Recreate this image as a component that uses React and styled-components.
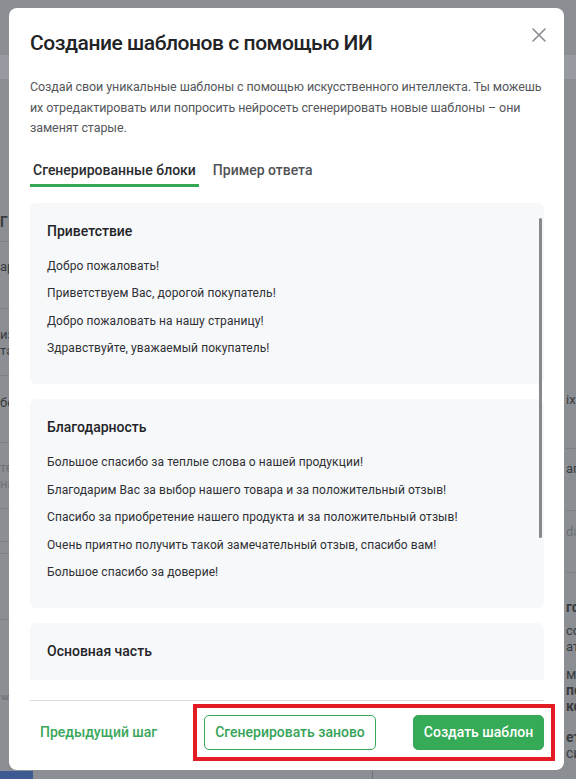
import React from "react";
import styled, { createGlobalStyle } from "styled-components";

const GlobalStyle = createGlobalStyle`
  html, body { margin: 0; padding: 0; }
  body { font-family: Roboto, "Noto Sans", Arial, sans-serif; }
  * { box-sizing: border-box; }
`;

const Screen = styled.div`
  position: relative;
  width: 576px;
  height: 779px;
  overflow: hidden;
  background: #8b8e93;
`;

/* ---------- dimmed page behind the modal ---------- */
const BgPage = styled.div`
  display: flex;
  flex-direction: column;
  height: 100%;
  color: #3a3c40;
  font-size: 13px;
`;
const BgHeader = styled.div`
  height: 24px;
  margin-top: 55px;
  background: #979aa0;
  flex: none;
`;
const BgMain = styled.div`
  flex: 1;
  display: grid;
  grid-template-columns: 9px 1fr;
  min-height: 0;
`;
const BgLeft = styled.div`
  display: flex;
  flex-direction: column;
  padding-top: 120px;
  overflow: hidden;
`;
const BgRight = styled.div`
  display: flex;
  flex-direction: column;
  padding: 313px 0 0 557px;
  overflow: hidden;
`;
const BgRow = styled.div`
  flex: none;
  height: ${(p) => p.$h}px;
  padding-top: ${(p) => p.$pt || 0}px;
  border-bottom: ${(p) => (p.$line ? "1px solid #7b7e83" : "none")};
  font-weight: ${(p) => (p.$bold ? 700 : 400)};
  color: ${(p) => (p.$light ? "#6e7176" : "#3a3c40")};
  font-size: ${(p) => (p.$bold ? 14 : 13)}px;
  line-height: 16px;
  white-space: nowrap;
  overflow: hidden;
`;
const Regular = styled.span`
  font-weight: 400;
`;
const BgBottom = styled.div`
  height: 8px;
  flex: none;
  display: grid;
  grid-template-columns: 33px 340px 1fr;
`;
const BgTab = styled.div`
  background: #3e5a93;
`;
const BgSplit = styled.div`
  border-right: 1px solid #6f7277;
`;

/* ---------- modal ---------- */
const Overlay = styled.div`
  position: absolute;
  inset: 0;
  padding: 8px 12px 9px 9px;
  display: flex;
`;
const Modal = styled.div`
  position: relative;
  flex: 1;
  background: #fff;
  border-radius: 8px;
  display: flex;
  flex-direction: column;
  padding: 21px 20px 20px 21px;
`;
const Title = styled.h1`
  margin: 0;
  font-size: 21px;
  line-height: 28px;
  font-weight: 500;
  color: #222326;
  letter-spacing: -0.45px;
`;
const CloseButton = styled.button`
  position: absolute;
  top: 19px;
  right: 17px;
  width: 16px;
  height: 16px;
  padding: 0;
  border: none;
  background: none;
  display: flex;
  cursor: pointer;
`;
const Description = styled.p`
  margin: 20px 0 0;
  font-size: 12.5px;
  line-height: 20.5px;
  color: #55575b;
  letter-spacing: -0.1px;
`;
const Tabs = styled.div`
  display: flex;
  gap: 11px;
  margin-top: 21px;
`;
const Tab = styled.div`
  padding: 0 3px 4px;
  font-size: 14px;
  line-height: 20px;
  font-weight: 500;
  color: ${(p) => (p.$active ? "#2b2c30" : "#505257")};
  border-bottom: 3px solid ${(p) => (p.$active ? "#34a853" : "transparent")};
`;
const ScrollArea = styled.div`
  position: relative;
  margin-top: 16px;
  height: 477px;
  overflow: hidden;
  flex: none;
`;
const CardList = styled.div`
  display: flex;
  flex-direction: column;
  gap: 15px;
`;
const Card = styled.section`
  background: #f7f8fa;
  border-radius: 6px;
  padding: 18px 17px 26px;
`;
const CardTitle = styled.h3`
  margin: 0 0 16px;
  font-size: 14px;
  line-height: 20px;
  font-weight: 500;
  color: #232428;
`;
const ItemList = styled.div`
  display: flex;
  flex-direction: column;
  gap: 8.5px;
`;
const Item = styled.div`
  font-size: 12px;
  line-height: 19px;
  letter-spacing: 0.08px;
  color: #2f3034;
`;
const Thumb = styled.div`
  position: absolute;
  top: 15px;
  right: 2px;
  width: 3px;
  height: 320px;
  border-radius: 2px;
  background: #87888b;
`;
const Divider = styled.hr`
  margin: 20px 0 0;
  border: none;
  border-top: 1px solid #dcdde0;
`;
const Footer = styled.div`
  display: flex;
  align-items: center;
  justify-content: space-between;
  padding-top: 14px;
`;
const LinkButton = styled.button`
  border: none;
  background: none;
  padding: 0 10px;
  height: 35px;
  font-family: inherit;
  font-size: 14px;
  font-weight: 500;
  color: #3aa75c;
  white-space: nowrap;
`;
const Highlight = styled.div`
  display: flex;
  gap: 37px;
  outline: 4px solid #e31b23;
  outline-offset: 7px;
`;
const Button = styled.button`
  height: 35px;
  padding: 0;
  border-radius: 5px;
  font-family: inherit;
  font-size: 14px;
  font-weight: 500;
  white-space: nowrap;
  border: 1px solid #37a85a;
  background: ${(p) => (p.$primary ? "#35aa57" : "#fff")};
  color: ${(p) => (p.$primary ? "#fff" : "#35a457")};
  width: ${(p) => p.$w}px;
`;

const blocks = [
  {
    title: "Приветствие",
    items: [
      "Добро пожаловать!",
      "Приветствуем Вас, дорогой покупатель!",
      "Добро пожаловать на нашу страницу!",
      "Здравствуйте, уважаемый покупатель!",
    ],
  },
  {
    title: "Благодарность",
    items: [
      "Большое спасибо за теплые слова о нашей продукции!",
      "Благодарим Вас за выбор нашего товара и за положительный отзыв!",
      "Спасибо за приобретение нашего продукта и за положительный отзыв!",
      "Очень приятно получить такой замечательный отзыв, спасибо вам!",
      "Большое спасибо за доверие!",
    ],
  },
  {
    title: "Основная часть",
    items: [
      "Мы рады, что вам понравился наш товар.",
      "Надеемся, что покупка принесёт вам много радости.",
    ],
  },
];

export default function App() {
  return (
    <>
      <GlobalStyle />
      <Screen>
        <BgPage>
          <BgHeader />
          <BgMain>
            <BgLeft>
              <BgRow $h={43} $pt={15} $line $bold>Г</BgRow>
              <BgRow $h={67} $pt={17} $line>ар</BgRow>
              <BgRow $h={67} $pt={18} $line>из<br />та</BgRow>
              <BgRow $h={67} $pt={19} $line>бо</BgRow>
              <BgRow $h={66} $pt={17} $line $light>те<br />на</BgRow>
              <BgRow $h={33} $line />
              <BgRow $h={12} $line />
              <BgRow $h={66} $line />
              <BgRow $h={80} $pt={70} $light>жк</BgRow>
            </BgLeft>
            <BgRight>
              <BgRow $h={57} $line>ix</BgRow>
              <BgRow $h={62} $pt={12} $line>агр</BgRow>
              <BgRow $h={62} $pt={13} $line $light>da</BgRow>
              <BgRow $h={50} $pt={26} $bold>го</BgRow>
              <BgRow $h={43}>со<br />ате</BgRow>
              <BgRow $h={63} $bold><Regular>ма</Regular><br />по<br />ко</BgRow>
              <BgRow $h={40} $bold>ет<br /><Regular>си</Regular></BgRow>
            </BgRight>
          </BgMain>
          <BgBottom>
            <BgTab />
            <BgSplit />
            <div />
          </BgBottom>
        </BgPage>

        <Overlay>
          <Modal>
            <Title>Создание шаблонов с помощью ИИ</Title>
            <CloseButton aria-label="Закрыть">
              <svg width="16" height="16" viewBox="0 0 16 16">
                <path d="M2 2 L14 14 M14 2 L2 14" stroke="#8a8b8f" strokeWidth="1.6" strokeLinecap="round" fill="none" />
              </svg>
            </CloseButton>
            <Description>
              Создай свои уникальные шаблоны с помощью искусственного интеллекта. Ты можешь их
              отредактировать или попросить нейросеть сгенерировать новые шаблоны – они заменят старые.
            </Description>
            <Tabs>
              <Tab $active>Сгенерированные блоки</Tab>
              <Tab>Пример ответа</Tab>
            </Tabs>
            <ScrollArea>
              <CardList>
                {blocks.map((b) => (
                  <Card key={b.title}>
                    <CardTitle>{b.title}</CardTitle>
                    <ItemList>
                      {b.items.map((it) => (
                        <Item key={it}>{it}</Item>
                      ))}
                    </ItemList>
                  </Card>
                ))}
              </CardList>
              <Thumb />
            </ScrollArea>
            <Divider />
            <Footer>
              <LinkButton>Предыдущий шаг</LinkButton>
              <Highlight>
                <Button $w={172}>Сгенерировать заново</Button>
                <Button $w={131} $primary>Создать шаблон</Button>
              </Highlight>
            </Footer>
          </Modal>
        </Overlay>
      </Screen>
    </>
  );
}
